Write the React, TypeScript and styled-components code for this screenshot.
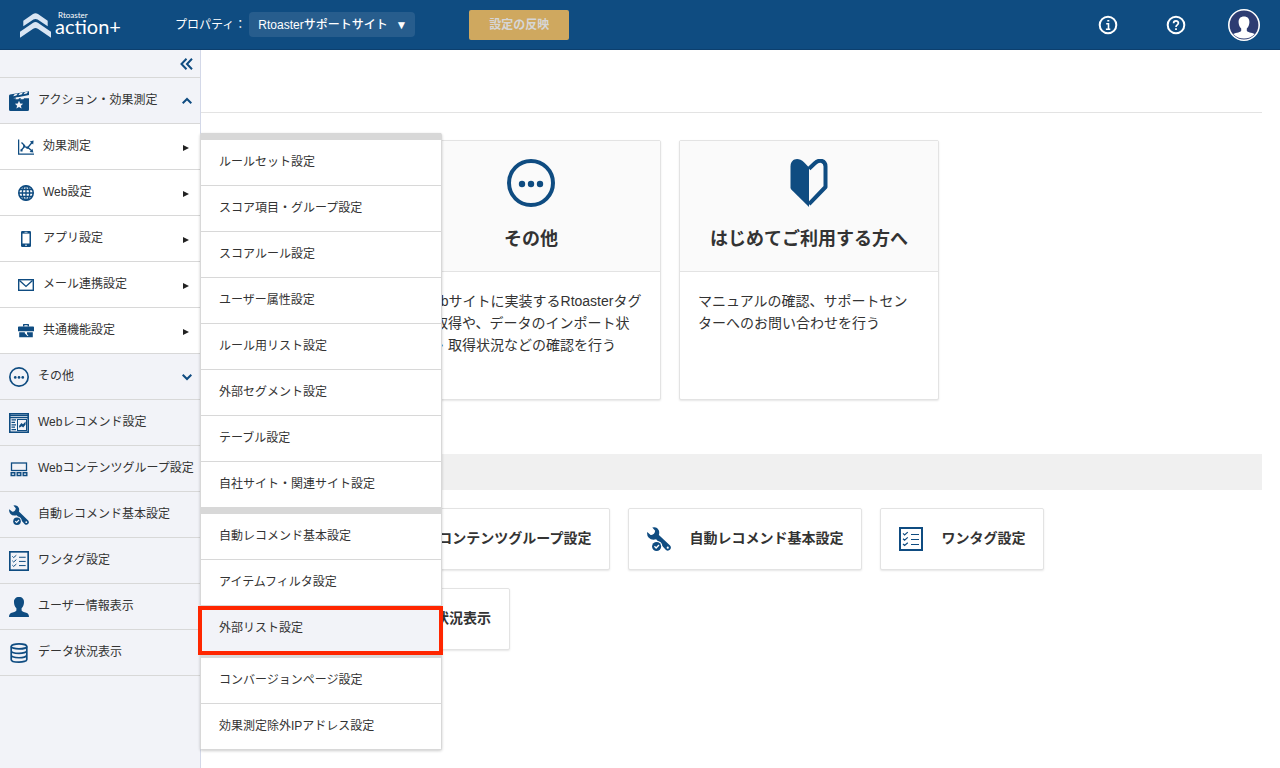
import React from "react";
import styled, { createGlobalStyle, css } from "styled-components";

const blue = "#0f4c81";
const line = "#d8d8d8";
const pale = "#f2f3f8";
const text = "#333333";

const GlobalStyle = createGlobalStyle`
  *, *::before, *::after { box-sizing: border-box; }
  body {
    margin: 0;
    color: ${text};
    background: #ffffff;
    font-family: "Liberation Sans", "Noto Sans CJK JP", sans-serif;
    font-size: 12px;
    line-height: 18px;
  }
  button, select { font: inherit; color: inherit; }
  a { color: inherit; text-decoration: none; }
  ul { list-style: none; margin: 0; padding: 0; }
  svg { display: block; flex: none; }
`;

/* ---------- icons ---------- */

type IconProps = { size: number };

const ClapperIcon = ({ size }: IconProps) => (
  <svg width={size} height={size} viewBox="0 0 20 20" fill={blue}>
    <path d="M1 3.6 18.6.4 20 .2V4L4 7.2H20V18.5Q20 20 18.500 20H1.500Q0 20 0 18.500V5Q0 3.800 1 3.600Z" />
    <path d="M5.500 3.200 8.800 2.600 7.400 4.600 4.200 5.200ZM10.700 2.200 14 1.600 12.600 3.600 9.400 4.200ZM15.900 1.300 19 .8 17.800 2.600 14.600 3.200ZM6.400 8.200 7.400 6.500H10.400L9.400 8.200ZM11.400 8.200 12.400 6.500H15.400L14.400 8.200Z" fill={pale} />
    <path d="m10 9.800 1.200 2.700 2.900.3-2.200 1.900.7 2.900-2.600-1.500-2.600 1.500.7-2.900-2.200-1.900 2.900-.3Z" fill={pale} />
  </svg>
);

const DotsIcon = ({ size }: IconProps) => (
  <svg width={size} height={size} viewBox="0 0 48 48" fill={blue}>
    <circle cx="24" cy="24" r="22" fill="none" stroke={blue} strokeWidth="4" />
    <circle cx="15" cy="25" r="3.200" />
    <circle cx="24" cy="25" r="3.200" />
    <circle cx="33" cy="25" r="3.200" />
  </svg>
);

const WebRecommendIcon = ({ size }: IconProps) => (
  <svg width={size} height={size} viewBox="0 0 20 20" fill="none" stroke={blue}>
    <rect x=".8" y=".8" width="18.400" height="18.400" strokeWidth="1.600" />
    <path d="M1 2.300h18M1 4.500h18" strokeWidth="1.300" />
    <path d="M2.500 6.800H7M2.500 9.300H6M2.500 11.800H7M2.500 14.200H6M2.500 16.700H7" strokeWidth="1.200" />
    <rect x="8.500" y="6.500" width="9" height="11" strokeWidth="1" />
    <path d="m10 13 2.400-3 1.600 1.200 2.600-2.600v3l-2.400 2.800-1.500-1.100-2.400 1.500Z" fill={blue} stroke="none" />
  </svg>
);

const ContentGroupIcon = ({ size }: IconProps) => (
  <svg width={size} height={size} viewBox="0 0 20 20" fill="none" stroke={blue} strokeWidth="1.300">
    <rect x="2.500" y="4" width="15" height="7.500" />
    <path d="M2.200 13.800h3.600v2.700H2.200ZM8.200 13.800h3.600v2.700H8.200ZM14.200 13.800h3.600v2.700h-3.600Z" strokeWidth="1.400" />
  </svg>
);

const WrenchIcon = ({ size, back = pale }: IconProps & { back?: string }) => (
  <svg width={size} height={size} viewBox="0 0 20 20">
    <path
      d="M4.400.4Q8.400-.6 9.900 3 10.500 4.800 9.900 6.600L19.200 15.400Q20.600 17.100 19.300 18.800 17.600 20.500 15.800 19.200L7.600 10.200Q3.800 11.400 1.300 8.700-.3 6.700.2 4.200L3 6.600Q6.300 7 6.800 3.200Z"
      fill={blue}
    />
    <circle cx="17.300" cy="17.200" r=".9" fill={back} />
    <circle cx="8" cy="16.200" r="4.800" fill={back} />
    <circle cx="8" cy="16.200" r="3.800" fill={blue} />
    <path d="m6.200 16.100 1.400 1.400 2.400-2.500" fill="none" stroke={back} strokeWidth="1.100" />
  </svg>
);

const ChecklistIcon = ({ size }: IconProps) => (
  <svg width={size} height={size} viewBox="0 0 24 24" fill="none" stroke={blue}>
    <rect x="1" y="1" width="22" height="22" strokeWidth="2" />
    <path d="m4 6.400 1.600 1.500 3.200-2.800M4 11.700l1.600 1.500 3.200-2.800M4 17l1.600 1.500 3.200-2.800M12 7.500h8M12 12.500h8M12 17.500h8" strokeWidth="1.200" />
  </svg>
);

const PersonIcon = ({ size }: IconProps) => (
  <svg width={size} height={size} viewBox="0 0 20 20" fill={blue}>
    <path d="M10 0C13.200 0 15.200 2 15 5.200 14.900 7.400 14.300 9.500 12.600 11.200V13.400C13 14.600 16 15 18 16.100 19.500 17 20 18.300 20 20H0C0 18.300.5 17 2 16.100 4 15 7 14.600 7.400 13.400V11.200C5.700 9.500 5.100 7.400 5 5.200 4.800 2 6.800 0 10 0Z" />
  </svg>
);

const DatabaseIcon = ({ size }: IconProps) => (
  <svg width={size} height={size} viewBox="0 0 20 20" fill="none" stroke={blue} strokeWidth="1.700">
    <ellipse cx="10" cy="3.400" rx="7.800" ry="2.500" />
    <path d="M2.200 3.400V16.400C2.200 20 17.800 20 17.800 16.400V3.400M2.200 7.700C2.200 11.200 17.800 11.200 17.800 7.700M2.200 12.100C2.200 15.600 17.800 15.600 17.800 12.100" />
  </svg>
);

const ChartIcon = ({ size }: IconProps) => (
  <svg width={size} height={size} viewBox="0 0 16 16" fill="none" stroke={blue} strokeWidth="1.300">
    <path d="M.6.500V15.200H16" />
    <path d="M3 11.500 6.500 7.500 9.500 9 14 3.500M3.500 3.500 6.500 6.500M10 8.500 14 12" />
    <path d="M11.800 2.600 15.600 1.500 15.200 5.600ZM15.400 13.400 11.600 13 14.400 9.800Z" fill={blue} stroke="none" />
    <path d="M2.500 10.500h2v2h-2ZM8.300 7.500h2v2h-2ZM5.200 6h2v2h-2Z" fill={blue} stroke="none" />
  </svg>
);

const GlobeIcon = ({ size }: IconProps) => (
  <svg width={size} height={size} viewBox="0 0 16 16" fill="none" stroke={blue} strokeWidth="1.300">
    <circle cx="8" cy="8" r="7.200" strokeWidth="1.600" />
    <ellipse cx="8" cy="8" rx="3.700" ry="7.200" />
    <path d="M8 .8v14.400M.8 8h14.400M1.800 4.500h12.400M1.800 11.500h12.400" />
  </svg>
);

const PhoneIcon = ({ size }: IconProps) => (
  <svg width={size} height={size} viewBox="0 0 16 16">
    <rect x="3" width="10" height="16" rx="1.200" fill={blue} />
    <path d="M4.500 2.600h7v9.900h-7Z" fill="#ffffff" />
    <path d="M6.500 1.300h3" stroke="#ffffff" strokeWidth=".7" />
    <circle cx="8" cy="14.200" r=".8" fill="#ffffff" />
  </svg>
);

const MailIcon = ({ size }: IconProps) => (
  <svg width={size} height={size} viewBox="0 0 16 16" fill="none" stroke={blue} strokeWidth="1.400">
    <rect x=".7" y="2.700" width="14.600" height="10.600" />
    <path d="M1.500 3.500 8 9.400l6.500-5.900" />
  </svg>
);

const BriefcaseIcon = ({ size }: IconProps) => (
  <svg width={size} height={size} viewBox="0 0 16 16" fill={blue}>
    <path d="M5 3.500V1.500Q5 1 5.600 1h4.800q.6 0 .6.500v2H9.600V2.200H6.400v1.300Z" />
    <path d="M0 4.300q0-.8.8-.8h14.400q.8 0 .8.800v3.900H0ZM1.200 9.200H6.800V10.200L9.500 13H10.500L9 11V9.200H14.800V14.300H1.200Z" />
  </svg>
);

const BeginnerIcon = () => (
  <svg width="48" height="48" viewBox="0 0 48 48">
    <path d="M24 8.500 19 3.200C13-2.500 5.500 0 5.500 7.500V28.500Q5.500 29.800 6.500 30.800L24 48Z" fill={blue} />
    <path d="M24 9.800 29.800 4.200C34.500-.3 40.500 1.800 40.500 7.500V28L24 45.200" fill="none" stroke={blue} strokeWidth="4" strokeLinejoin="round" />
  </svg>
);

const Chevron = ({ up }: { up?: boolean }) => (
  <svg width="10" height="8" viewBox="0 0 10 8" fill="none" stroke={blue} strokeWidth="2">
    <path d={up ? "M.7 6.300 5 2l4.300 4.300" : "M.7 1.700 5 6l4.300-4.300"} />
  </svg>
);

const Triangle = () => (
  <svg width="6" height="6" viewBox="0 0 6 6" fill="#222222">
    <path d="M0 0 6 3 0 6Z" />
  </svg>
);

const LogoMark = () => (
  <svg width="31" height="26" viewBox="0 0 31 26" fill="#d9e5f3">
    <path d="M3.300 8.800 13 2Q15.500.4 18 2l9.700 6.800v5.500L17.600 7.600Q15.500 6.300 13.400 7.600L3.300 14.300Z" />
    <path d="M0 19.800 12.800 11Q15.500 9.200 18.200 11L31 19.800V25.700L17.800 16.800Q15.500 15.400 13.200 16.800L0 25.700Z" />
  </svg>
);

const RoundIcon = ({ kind }: { kind: "info" | "help" }) => (
  <svg width="20" height="20" viewBox="0 0 20 20" fill="none" stroke="#ffffff" strokeWidth="2">
    <circle cx="10" cy="10" r="8.300" />
    {kind === "info" ? (
      <path d="M8.200 8.700h2.300v5.300M7.900 14.300h4.400M9.300 5.700h2" strokeWidth="1.600" />
    ) : (
      <path d="M7.600 8.300C7.600 5.200 12.400 5.200 12.400 8.100 12.400 9.900 10 9.800 10 12M10 13.200v1.800" strokeWidth="1.700" />
    )}
  </svg>
);

const AvatarIcon = () => (
  <svg width="32" height="32" viewBox="0 0 32 32">
    <circle cx="16" cy="16" r="15.200" fill="#2d3c72" stroke="#ffffff" strokeWidth="1.600" />
    <path d="M16 7.500c3.600 0 5.500 2.300 5.400 5.700-.1 2.400-.9 4.600-2.600 6.300v2.200c.5 1.500 4.600 1.800 8 3.200A15.200 15.200 0 0 1 5.200 24.900c3.400-1.400 7.500-1.700 8-3.200v-2.200c-1.700-1.700-2.500-3.900-2.600-6.300C10.500 9.800 12.400 7.500 16 7.500Z" fill="#ffffff" />
  </svg>
);

/* ---------- header ---------- */

const Header = styled.header`
  display: flex;
  align-items: center;
  height: 50px;
  padding: 0 20px;
  background: ${blue};
  border-bottom: 1px solid #0c3f6e;
  color: #ffffff;
`;

const Logo = styled.a`
  display: flex;
  align-items: center;
  gap: 4px;
  width: 155px;
  font-family: Lato, "Open Sans", sans-serif;
`;

const LogoText = styled.span`
  display: flex;
  flex-direction: column;
  padding-bottom: 6px;
`;

const LogoSmall = styled.span`
  padding-left: 3px;
  font-size: 8px;
  line-height: 8px;
`;

const LogoLarge = styled.span`
  font-size: 20px;
  line-height: 14px;
`;

const PropertyLabel = styled.label`
  margin-right: 3px;
`;

const SelectBox = styled.div`
  display: grid;
  align-items: center;
  width: 166px;
  border-radius: 4px;
  background: #275d8d;
  font-weight: 500;
`;

const Select = styled.select`
  grid-area: 1 / 1;
  appearance: none;
  height: 25px;
  padding: 0 24px 0 9px;
  border: 0;
  background: transparent;
  color: #ffffff;
`;

const SelectArrow = styled.span`
  grid-area: 1 / 1;
  justify-self: end;
  padding-right: 8px;
  pointer-events: none;
`;

const ApplyButton = styled.button`
  width: 100px;
  height: 30px;
  margin-left: 54px;
  padding: 0;
  border: 0;
  border-radius: 2px;
  background: #cfa85f;
  color: #d6d6d6;
  font-weight: 700;
`;

const HeaderTools = styled.div`
  display: flex;
  align-items: center;
  gap: 42px;
  margin-left: auto;
`;

const HelpTools = styled.div`
  display: flex;
  gap: 48px;
`;

const IconButton = styled.button`
  padding: 0;
  border: 0;
  background: none;
`;

/* ---------- sidebar ---------- */

const Layout = styled.div`
  display: flex;
  min-height: calc(100vh - 50px);
`;

const Sidebar = styled.aside`
  position: relative;
  z-index: 1;
  flex: none;
  width: 201px;
  border-right: 1px solid #d3d8e8;
  background: ${pale};
`;

const CollapseRow = styled.div`
  display: flex;
  align-items: center;
  justify-content: flex-end;
  height: 28px;
  padding-right: 7px;
  border-bottom: 1px solid ${line};
`;

const rowStyle = css<{ $sub?: boolean }>`
  display: flex;
  align-items: center;
  gap: 9px;
  width: 100%;
  height: 46px;
  padding: 0 ${(p) => (p.$sub ? 11 : 8)}px 0 ${(p) => (p.$sub ? 18 : 9)}px;
  border: 0;
  border-bottom: 1px solid ${line};
  background: ${(p) => (p.$sub ? "#ffffff" : pale)};
  text-align: left;
  white-space: nowrap;
`;

const RowLink = styled.a<{ $sub?: boolean }>`
  ${rowStyle}
`;

const RowButton = styled.button<{ $sub?: boolean }>`
  ${rowStyle}
`;

const RowLabel = styled.span`
  flex: 1;
  min-width: 0;
  padding-bottom: 2px;
`;

const RowArrow = styled.span`
  padding-top: 3px;
`;

/* ---------- flyout ---------- */

const Flyout = styled.nav`
  position: absolute;
  top: 83px;
  left: 200px;
  width: 242px;
  border: 1px solid ${line};
  border-top: 0;
  border-radius: 2px;
  background: #ffffff;
  box-shadow: 0 1px 3px rgba(0, 0, 0, 0.2);
`;

const FlyoutGroup = styled.ul`
  border-top: 7px solid ${line};
`;

const FlyoutItem = styled.li`
  position: relative;
  & + & {
    border-top: 1px solid ${line};
  }
`;

const FlyoutLink = styled.a<{ $active?: boolean }>`
  display: flex;
  align-items: center;
  height: 45px;
  padding: 0 18px 2px;
  background: ${(p) => (p.$active ? pale : "#ffffff")};
`;

const Highlight = styled.span`
  position: absolute;
  inset: 0 -2px -4px -3px;
  z-index: 1;
  border: 4px solid #ff2600;
  pointer-events: none;
`;

/* ---------- main ---------- */

const Main = styled.main`
  flex: 1;
  min-width: 0;
  padding-right: 18px;
`;

const TitleBar = styled.div`
  height: 63px;
  border-bottom: 1px solid #e3e3e3;
`;

const Cards = styled.div`
  display: flex;
  gap: 18px;
  margin-top: 27px;
  padding-left: 200px;
`;

const Card = styled.a`
  width: 260px;
  min-height: 260px;
  border: 1px solid #e3e3e3;
  border-radius: 2px;
  background: #ffffff;
  box-shadow: 0 1px 2px rgba(0, 0, 0, 0.1);
`;

const CardHead = styled.div`
  display: flex;
  flex-direction: column;
  align-items: center;
  gap: 20px;
  height: 131px;
  padding-top: 18px;
  border-bottom: 1px solid #e3e3e3;
  background: #fafafa;
`;

const CardTitle = styled.h2`
  margin: 0;
  font-size: 18px;
  line-height: 24px;
`;

const CardText = styled.p`
  margin: 0;
  padding: 18px;
  font-size: 14px;
  line-height: 22px;
`;

const SectionBar = styled.div`
  height: 36px;
  margin-top: 54px;
  background: #f0f0f0;
`;

const Tiles = styled.div`
  display: flex;
  flex-direction: column;
  gap: 18px;
  padding: 18px 0;
`;

const TileRow = styled.div<{ $indent: number }>`
  display: flex;
  gap: 18px;
  padding-left: ${(p) => p.$indent}px;
`;

const Tile = styled.a`
  display: flex;
  align-items: center;
  gap: 18px;
  height: 62px;
  padding: 0 18px;
  border: 1px solid #e3e3e3;
  border-radius: 2px;
  background: #ffffff;
  box-shadow: 0 1px 2px rgba(0, 0, 0, 0.1);
  font-size: 14px;
  font-weight: 700;
  white-space: nowrap;
`;

const TileLabel = styled.span`
  padding-bottom: 2px;
`;

const subRows = [
  { label: "効果測定", icon: <ChartIcon size={16} /> },
  { label: "Web設定", icon: <GlobeIcon size={16} /> },
  { label: "アプリ設定", icon: <PhoneIcon size={16} /> },
  { label: "メール連携設定", icon: <MailIcon size={16} /> },
  { label: "共通機能設定", icon: <BriefcaseIcon size={16} /> },
];

const linkRows = [
  { label: "Webレコメンド設定", icon: <WebRecommendIcon size={20} /> },
  { label: "Webコンテンツグループ設定", icon: <ContentGroupIcon size={20} /> },
  { label: "自動レコメンド基本設定", icon: <WrenchIcon size={20} /> },
  { label: "ワンタグ設定", icon: <ChecklistIcon size={20} /> },
  { label: "ユーザー情報表示", icon: <PersonIcon size={20} /> },
  { label: "データ状況表示", icon: <DatabaseIcon size={20} /> },
];

const flyoutGroups = [
  [
    "ルールセット設定",
    "スコア項目・グループ設定",
    "スコアルール設定",
    "ユーザー属性設定",
    "ルール用リスト設定",
    "外部セグメント設定",
    "テーブル設定",
    "自社サイト・関連サイト設定",
  ],
  ["自動レコメンド基本設定", "アイテムフィルタ設定", "外部リスト設定"],
  ["コンバージョンページ設定", "効果測定除外IPアドレス設定"],
];

const activeItem = "外部リスト設定";

const cards = [
  {
    title: "その他",
    icon: <DotsIcon size={48} />,
    body: "Webサイトに実装するRtoasterタグの取得や、データのインポート状況・取得状況などの確認を行う",
  },
  {
    title: "はじめてご利用する方へ",
    icon: <BeginnerIcon />,
    body: "マニュアルの確認、サポートセンターへのお問い合わせを行う",
  },
];

const tileRows = [
  {
    indent: 147,
    tiles: [
      { label: "Webコンテンツグループ設定", icon: <ContentGroupIcon size={24} /> },
      { label: "自動レコメンド基本設定", icon: <WrenchIcon size={24} back="#ffffff" /> },
      { label: "ワンタグ設定", icon: <ChecklistIcon size={24} /> },
    ],
  },
  {
    indent: 131,
    tiles: [{ label: "データ状況表示", icon: <DatabaseIcon size={24} /> }],
  },
];

export default function App() {
  return (
    <>
      <GlobalStyle />
      <Header>
        <Logo href="#">
          <LogoMark />
          <LogoText>
            <LogoSmall>Rtoaster</LogoSmall>
            <LogoLarge>action+</LogoLarge>
          </LogoText>
        </Logo>
        <PropertyLabel htmlFor="property">プロパティ：</PropertyLabel>
        <SelectBox>
          <Select id="property">
            <option>Rtoasterサポートサイト</option>
          </Select>
          <SelectArrow aria-hidden="true">▼</SelectArrow>
        </SelectBox>
        <ApplyButton type="button">設定の反映</ApplyButton>
        <HeaderTools>
          <HelpTools>
            <IconButton type="button" aria-label="お知らせ">
              <RoundIcon kind="info" />
            </IconButton>
            <IconButton type="button" aria-label="ヘルプ">
              <RoundIcon kind="help" />
            </IconButton>
          </HelpTools>
          <IconButton type="button" aria-label="アカウント">
            <AvatarIcon />
          </IconButton>
        </HeaderTools>
      </Header>
      <Layout>
        <Sidebar>
          <CollapseRow>
            <IconButton type="button" aria-label="メニューを閉じる">
              <svg width="13" height="12" viewBox="0 0 13 12" fill="none" stroke={blue} strokeWidth="2">
                <path d="M6.500.8 1.500 6l5 5.200M12 .8 7 6l5 5.200" />
              </svg>
            </IconButton>
          </CollapseRow>
          <nav>
            <RowButton type="button" aria-expanded="true">
              <ClapperIcon size={20} />
              <RowLabel>アクション・効果測定</RowLabel>
              <Chevron up />
            </RowButton>
            {subRows.map((row) => (
              <RowButton type="button" key={row.label} $sub>
                {row.icon}
                <RowLabel>{row.label}</RowLabel>
                <RowArrow>
                  <Triangle />
                </RowArrow>
              </RowButton>
            ))}
            <RowButton type="button" aria-expanded="false">
              <DotsIcon size={20} />
              <RowLabel>その他</RowLabel>
              <Chevron />
            </RowButton>
            {linkRows.map((row) => (
              <RowLink href="#" key={row.label}>
                {row.icon}
                <RowLabel>{row.label}</RowLabel>
              </RowLink>
            ))}
          </nav>
          <Flyout>
            {flyoutGroups.map((group) => (
              <FlyoutGroup key={group[0]}>
                {group.map((label) => (
                  <FlyoutItem key={label}>
                    <FlyoutLink href="#" $active={label === activeItem}>
                      {label}
                    </FlyoutLink>
                    {label === activeItem && <Highlight />}
                  </FlyoutItem>
                ))}
              </FlyoutGroup>
            ))}
          </Flyout>
        </Sidebar>
        <Main>
          <TitleBar />
          <Cards>
            {cards.map((card) => (
              <Card href="#" key={card.title}>
                <CardHead>
                  {card.icon}
                  <CardTitle>{card.title}</CardTitle>
                </CardHead>
                <CardText>{card.body}</CardText>
              </Card>
            ))}
          </Cards>
          <SectionBar />
          <Tiles>
            {tileRows.map((row) => (
              <TileRow key={row.indent} $indent={row.indent}>
                {row.tiles.map((tile) => (
                  <Tile href="#" key={tile.label}>
                    {tile.icon}
                    <TileLabel>{tile.label}</TileLabel>
                  </Tile>
                ))}
              </TileRow>
            ))}
          </Tiles>
        </Main>
      </Layout>
    </>
  );
}
